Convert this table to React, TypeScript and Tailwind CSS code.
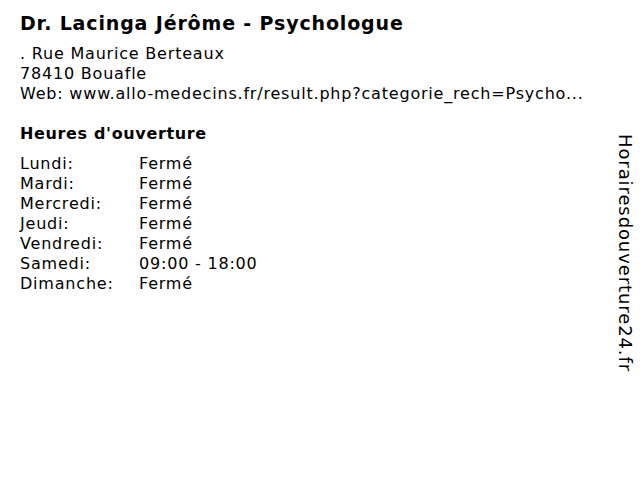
import React from 'react';

const hours: [string, string][] = [
  ['Lundi:', 'Fermé'],
  ['Mardi:', 'Fermé'],
  ['Mercredi:', 'Fermé'],
  ['Jeudi:', 'Fermé'],
  ['Vendredi:', 'Fermé'],
  ['Samedi:', '09:00 - 18:00'],
  ['Dimanche:', 'Fermé'],
];

const App: React.FC = () => {
  return (
    <div className="w-[640px] h-[480px] bg-white text-black flex font-['DejaVu_Sans',sans-serif] overflow-hidden">
      <div className="flex-1 pl-5 pt-[10px]">
        <h1 className="text-[19px] font-bold leading-[26px] tracking-[0.85px]">Dr. Lacinga Jérôme - Psychologue</h1>

        <div className="mt-[8px] text-[16px] leading-[20px] tracking-[0.8px]">
          <div>. Rue Maurice Berteaux</div>
          <div>78410 Bouafle</div>
          <div>Web: www.allo-medecins.fr/result.php?categorie_rech=Psycho...</div>
        </div>

        <h2 className="mt-[20px] text-[16px] font-bold leading-[20px] tracking-[0.65px]">Heures d'ouverture</h2>

        <div className="mt-[10px] text-[16px] leading-[20px] tracking-[0.8px]">
          {hours.map(([day, time]) => (
            <div key={day} className="flex">
              <span className="w-[119px] shrink-0">{day}</span>
              <span>{time}</span>
            </div>
          ))}
        </div>
      </div>

      <div className="w-[40px] flex justify-end pr-[5px] pt-[134px]">
        <span className="[writing-mode:vertical-rl] text-[18px] leading-[20px] tracking-[0.9px] h-fit">
          Horairesdouverture24.fr
        </span>
      </div>
    </div>
  );
};

export default App;
